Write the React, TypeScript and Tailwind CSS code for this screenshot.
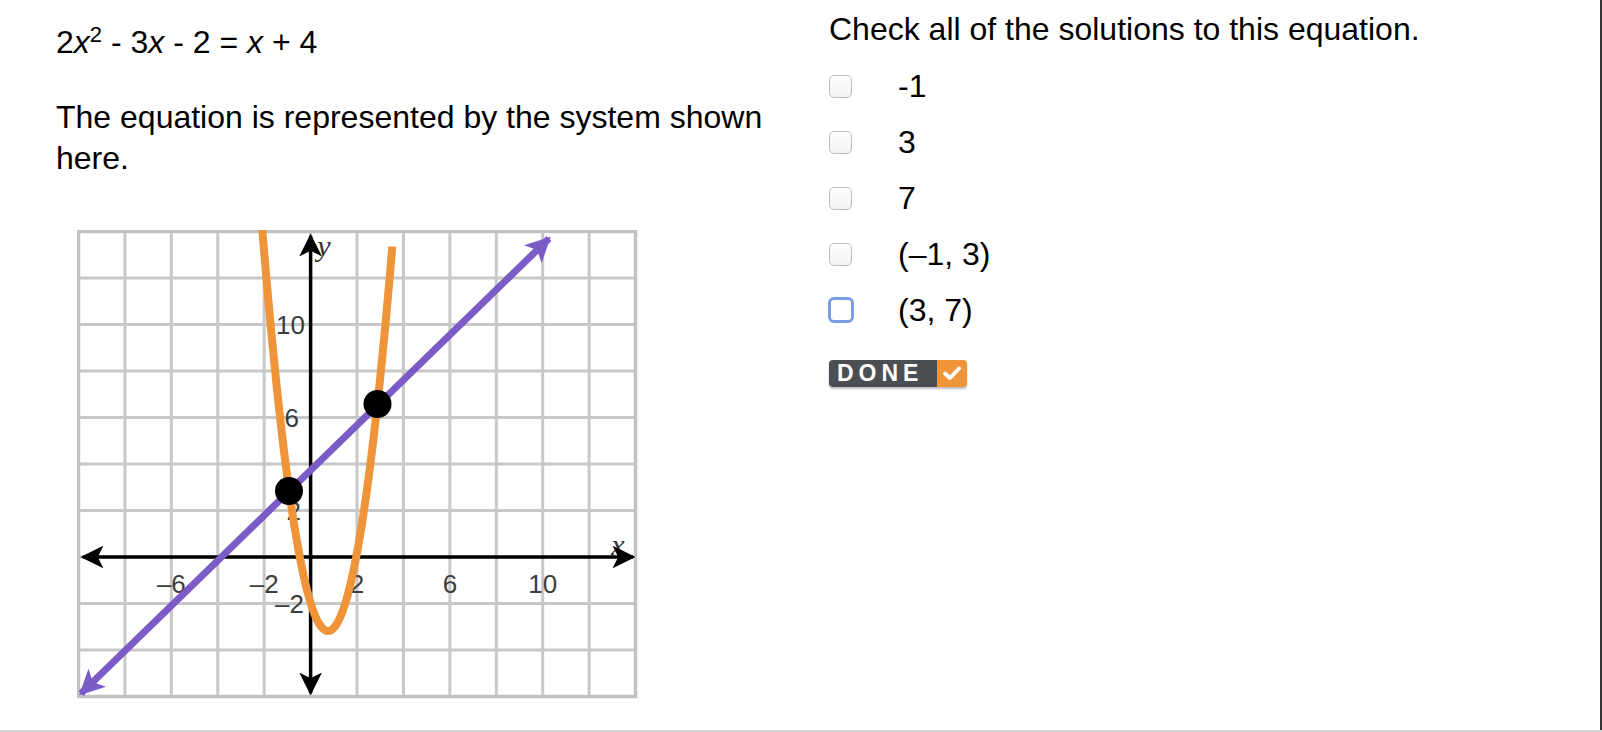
import React from 'react';

// grid geometry (pixels inside the svg)
const GX = (i: number) => 1.5 + i * 46.42;
const GY = (j: number) => 1.5 + j * 46.5;
const AXIS_X = GX(5);
const AXIS_Y = GY(7);

const parabola = () => {
  const pts: string[] = [];
  for (let x = 185.3; x <= 315.8; x += 1) {
    const y = 401 - 0.093 * (x - 251) * (x - 251);
    pts.push(`${x.toFixed(1)},${y.toFixed(1)}`);
  }
  return 'M' + pts.join(' L');
};

const Graph = () => {
  const xLabels = [
    { t: '–6', x: GX(2) },
    { t: '–2', x: GX(4) },
    { t: '2', x: GX(6) },
    { t: '6', x: GX(8) },
    { t: '10', x: GX(10) },
  ];
  const yLabels = [
    { t: '10', y: GY(2), x: 228 },
    { t: '6', y: GY(4), x: 222 },
    { t: '2', y: GY(6), x: 224 },
    { t: '–2', y: GY(8), x: 227 },
  ];

  return (
    <svg width="562" height="470" viewBox="0 0 562 470" className="ml-[21px] mt-[51px] block">
      <defs>
        <marker id="ah-black" viewBox="0 0 10 10" refX="9" refY="5" markerWidth="6.5" markerHeight="6.5" orient="auto-start-reverse" markerUnits="strokeWidth">
          <path d="M0 0 L10 5 L0 10 L2.5 5 Z" fill="#000" />
        </marker>
        <marker id="ah-purple" viewBox="0 0 10 10" refX="9" refY="5" markerWidth="3.6" markerHeight="3.6" orient="auto-start-reverse" markerUnits="strokeWidth">
          <path d="M0 0 L10 5 L0 10 L2.5 5 Z" fill="#7b5cc6" />
        </marker>
      </defs>
      <rect x="0" y="0" width="560" height="468" fill="#fff" />
      {Array.from({ length: 13 }).map((_, i) => (
        <line key={'v' + i} x1={GX(i)} y1={0} x2={GX(i)} y2={468} stroke="#c8c8c8" strokeWidth="3" />
      ))}
      {Array.from({ length: 11 }).map((_, j) => (
        <line key={'h' + j} x1={0} y1={GY(j)} x2={560} y2={GY(j)} stroke="#c8c8c8" strokeWidth="3" />
      ))}
      <rect x="1.5" y="1.5" width="557" height="465" fill="none" stroke="#c2c2c2" strokeWidth="3.5" />

      {xLabels.map((l) => (
        <text key={'xl' + l.t} x={l.x} y={AXIS_Y + 36} textAnchor="middle" fontSize="26" fill="#3c3c3c" fontFamily="Liberation Sans, Arial, sans-serif">
          {l.t}
        </text>
      ))}
      {yLabels.map((l) => (
        <text key={'yl' + l.t} x={l.x} y={l.y + 9} textAnchor="end" fontSize="26" fill="#3c3c3c" fontFamily="Liberation Sans, Arial, sans-serif">
          {l.t}
        </text>
      ))}
      <text x="541" y="325" textAnchor="middle" fontSize="30" fontStyle="italic" fill="#333" fontFamily="Liberation Serif, serif">x</text>
      <text x="247" y="26" textAnchor="middle" fontSize="30" fontStyle="italic" fill="#333" fontFamily="Liberation Serif, serif">y</text>

      {/* axes */}
      <line x1="6" y1={AXIS_Y} x2="556" y2={AXIS_Y} stroke="#000" strokeWidth="3.5" markerStart="url(#ah-black)" markerEnd="url(#ah-black)" />
      <line x1={AXIS_X} y1="6" x2={AXIS_X} y2="463" stroke="#000" strokeWidth="3.5" markerStart="url(#ah-black)" markerEnd="url(#ah-black)" />

      {/* parabola and line */}
      <path d={parabola()} fill="none" stroke="#f0943a" strokeWidth="8" strokeLinecap="butt" />
      <line x1="4" y1="463.5" x2="472" y2="8.5" stroke="#7b5cc6" strokeWidth="7" markerStart="url(#ah-purple)" markerEnd="url(#ah-purple)" />

      <circle cx="212" cy="261" r="14" fill="#000" />
      <circle cx="300.5" cy="174" r="14" fill="#000" />
    </svg>
  );
};

const Box = ({ focused }: { focused?: boolean }) =>
  focused ? (
    <div className="h-[26px] w-[26px] -ml-[1px] rounded-[6px] border-[3px] border-[#7b9de3] bg-white" />
  ) : (
    <div className="h-[23px] w-[23px] rounded-[5px] border-[1.5px] border-[#bdbdbd] bg-gradient-to-b from-white to-[#f2f2f2]" />
  );

export default function App() {
  const options = ['-1', '3', '7', '(–1, 3)', '(3, 7)'];

  return (
    <div className="h-[732px] w-full bg-white border-b-2 border-[#d4d4d4] font-['Liberation_Sans',Arial,sans-serif] text-black">
      <div className="flex h-[730px] border-r-2 border-[#333]">
        {/* left: equation + graph */}
        <div className="w-[773px] shrink-0 pl-[56px] pt-[24px]">
          <div className="h-[36px] text-[32px] leading-[36px] whitespace-nowrap">
            2<i>x</i>
            <sup className="text-[22px]">2</sup> - 3<i>x</i> - 2 = <i>x</i> + 4
          </div>
          <p className="mt-[37px] w-[720px] text-[32px] leading-[41px]">
            The equation is represented by the system shown here.
          </p>
          <Graph />
        </div>

        {/* right: choices */}
        <div className="pl-[56px] pt-[11px]">
          <div className="h-[36px] text-[32px] leading-[36px] whitespace-nowrap">
            Check all of the solutions to this equation.
          </div>
          <div className="mt-[11px]">
            {options.map((o, i) => (
              <div key={i} className="flex h-[56px] items-center">
                <div className="flex w-[69px] items-center">
                  <Box focused={i === 4} />
                </div>
                <span className="text-[32px] leading-[36px]">{o}</span>
              </div>
            ))}
          </div>
          <div className="mt-[22px] flex h-[27px] w-[138px] overflow-hidden rounded-[4px] shadow-[0_2px_2px_rgba(0,0,0,0.25)]">
            <div className="flex w-[108px] items-center bg-[#4b4e53] pl-[8px] text-[23px] font-bold leading-none tracking-[5px] text-white">
              DONE
            </div>
            <div className="flex w-[30px] items-center justify-center bg-[#f0943a]">
              <svg width="20" height="17" viewBox="0 0 20 17">
                <path d="M3 8.5 L8 13 L17 3.5" fill="none" stroke="#fff" strokeWidth="3.8" strokeLinecap="round" strokeLinejoin="round" />
              </svg>
            </div>
          </div>
        </div>
      </div>
    </div>
  );
}
